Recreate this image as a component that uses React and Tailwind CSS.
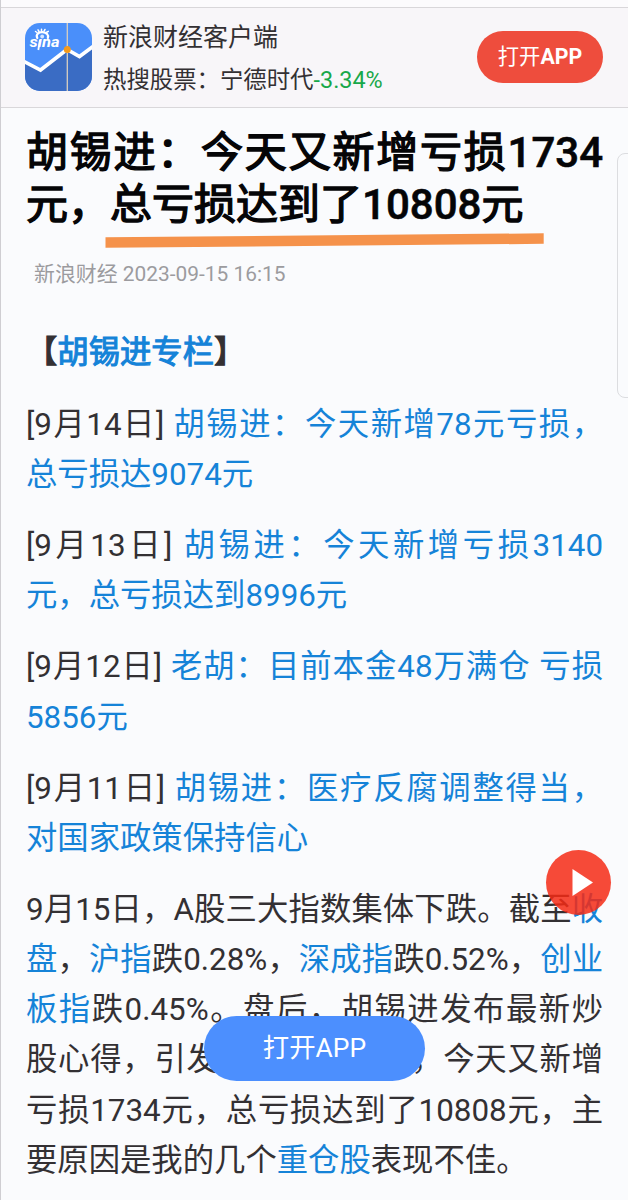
function A({ children }) {
  return <a className="text-[#1583d8]">{children}</a>;
}

function Line({ full, children }) {
  return (
    <span
      className={
        full
          ? "block whitespace-nowrap [text-align-last:justify]"
          : "block whitespace-nowrap"
      }
    >
      {children}
    </span>
  );
}

function Num({ children }) {
  return <span className="font-medium [-webkit-text-stroke-width:0.6px]">{children}</span>;
}

function AppLogo() {
  return (
    <svg className="h-[68px] w-[67px] shrink-0" viewBox="0 0 67 68" aria-hidden="true">
      <defs>
        <clipPath id="tile">
          <rect width="67" height="68" rx="15" />
        </clipPath>
      </defs>
      <g clipPath="url(#tile)">
        <rect width="67" height="68" fill="#4a8ffa" />
        <path d="M0 39L15.500 47.500L42 26.500L54.500 34L67 24V68H0Z" fill="#3a6cc4" />
        <path d="M-1 38.500L15.500 47L42 26.500L54.500 33.500L68 23.500" fill="none" stroke="#fff" strokeWidth="3.600" />
        <path d="M42.300 0V68" stroke="#d8cfc0" strokeWidth="1.300" />
        <circle cx="42.300" cy="26.500" r="3.500" fill="#f59a1b" />
      </g>
      <g fill="none" stroke="#fff" strokeLinecap="round">
        <path d="M12.300 15C10.500 11.500 13.500 9 17.500 9.200C21.500 9.400 24 12 22.800 15" strokeWidth="2.200" />
        <path d="M12 9.500L10.500 8.500M14 8.500L13 6.800M16.500 8L16.500 6.200M19 8.200L20 6.500M21.300 9.500L23.300 8.300" strokeWidth="1.500" />
      </g>
      <circle cx="17.200" cy="13.500" r="1.900" fill="#d5e6ff" />
      <text x="4.500" y="24" fill="#fff" fontSize="14" fontWeight="700" fontStyle="italic" fontFamily="Roboto, sans-serif" textLength="30" lengthAdjust="spacingAndGlyphs">sına</text>
      <path d="M15 17L13.300 27" stroke="#fff" strokeWidth="1.800" />
    </svg>
  );
}

export default function App() {
  return (
    <div className="relative h-[1200px] w-[628px] overflow-hidden border-l border-[#cfced2] bg-[#fafbfd] font-['Roboto','Noto_Sans_CJK_SC',sans-serif] text-[#333033] [text-spacing-trim:space-all]">
      <div className="h-[7px] bg-[#fcfbfd]" />
      <header className="flex h-[101px] items-center border-y border-[#d9d7da] bg-[#f8f6f9] pr-[25px] pb-0.5 pl-6">
        <AppLogo />
        <div className="ml-[11px] grow whitespace-nowrap pt-2">
          <div className="h-[41px] text-[25px] leading-[38px]">新浪财经客户端</div>
          <div className="h-[42px] text-[23.4px] leading-[40px]">
            热搜股票：宁德时代<span className="text-[#18a84a]">-3.34%</span>
          </div>
        </div>
        <button className="h-[52px] w-[126px] rounded-full bg-[#ee4d3d] text-[21.3px] leading-[49px] whitespace-nowrap text-white">
          打开<span className="font-bold">APP</span>
        </button>
      </header>

      <main className="pr-[25px] pl-[25px]">
        <h1 className="mt-[19px] text-[42px] leading-[52px] text-[#050507] [-webkit-text-stroke-width:1.4px]">
          <Line full>胡锡进：今天又新增亏损<Num>1734</Num></Line>
          <Line>元，总亏损达到了<Num>10808</Num>元</Line>
        </h1>
        <div className="mt-[28px] pl-2 text-[20.9px] leading-[30px] text-[#9c9b9f]">新浪财经 2023-09-15 16:15</div>

        <div className="mt-[39px] flex flex-col gap-[20.8px] text-[31.35px] leading-[50.2px]">
          <p className="mb-px">
            <Line>
              <b className="font-normal [-webkit-text-stroke-width:1.1px]">【<A>胡锡进专栏</A>】</b>
            </Line>
          </p>
          <p>
            <Line full>[9月14日] <A>胡锡进：今天新增78元亏损，</A></Line>
            <Line><A>总亏损达9074元</A></Line>
          </p>
          <p>
            <Line full>[9月13日] <A>胡锡进：今天新增亏损3140</A></Line>
            <Line><A>元，总亏损达到8996元</A></Line>
          </p>
          <p>
            <Line full>[9月12日] <A>老胡：目前本金48万满仓 亏损</A></Line>
            <Line><A>5856元</A></Line>
          </p>
          <p>
            <Line full>[9月11日] <A>胡锡进：医疗反腐调整得当，</A></Line>
            <Line><A>对国家政策保持信心</A></Line>
          </p>
          <p>
            <Line full>9月15日，A股三大指数集体下跌。截至<A>收</A></Line>
            <Line full><A>盘</A>，<A>沪指</A>跌0.28%，<A>深成指</A>跌0.52%，<A>创业</A></Line>
            <Line full><A>板指</A>跌0.45%。盘后，胡锡进发布最新炒</Line>
            <Line full>股心得，引发关注。他表示，今天又新增</Line>
            <Line full>亏损1734元，总亏损达到了10808元，主</Line>
            <Line>要原因是我的几个<A>重仓股</A>表现不佳。</Line>
          </p>
        </div>
      </main>

      <svg className="absolute top-[232px] left-[104px] h-[18px] w-[440px]" viewBox="0 0 440 18" aria-hidden="true">
        <path d="M0.500 5.300L438.700 1.300V11.800L0.500 15.800Z" fill="#f5924b" />
      </svg>

      <aside className="absolute top-[153px] left-[616px] h-[245px] w-6 rounded-lg border border-[#dcdde0] bg-[#fafbfd]" />

      <button aria-label="播放" className="absolute top-[850px] left-[545px] h-[65px] w-[65px] rounded-full bg-[#f42a15]/85">
        <svg className="h-full w-full" viewBox="0 0 65 65" aria-hidden="true">
          <path d="M26.500 19L47 32.500L26.500 46Z" fill="#fff" />
        </svg>
      </button>

      <button className="absolute top-[1016px] left-[203px] h-[65px] w-[221px] rounded-full bg-[#4c8ffe] text-[26.4px] leading-[61px] text-white">
        打开APP
      </button>
    </div>
  );
}
